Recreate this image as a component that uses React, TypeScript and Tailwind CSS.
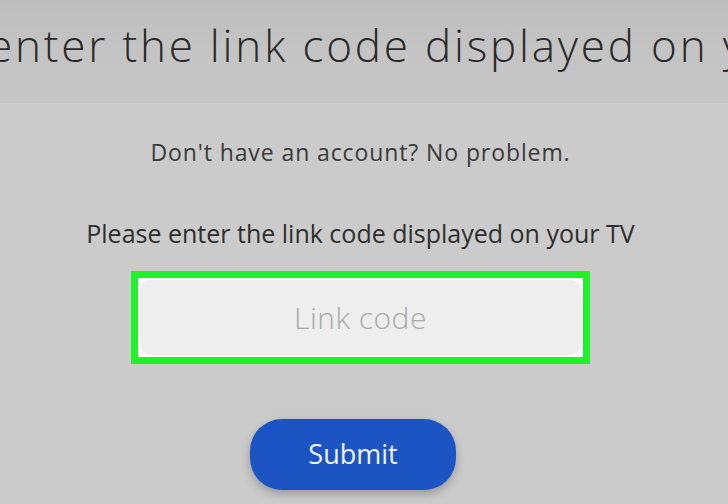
export default function App() {
  return (
    <div className="flex h-[504px] w-[728px] flex-col overflow-hidden bg-[#cbcbcb] font-['Open_Sans',sans-serif]">
      {/* header band with the oversized heading, clipped both sides */}
      <div className="relative h-[103px] shrink-0 overflow-hidden bg-gradient-to-b from-[#bdbdbd] via-[#c4c4c4] to-[#c6c6c6]">
        <div className="absolute left-[-12px] top-[17px] whitespace-nowrap text-[44px] font-light leading-[56px] tracking-[2.8px] text-[#2a2a2a]">
          enter the link code displayed on your TV
        </div>
      </div>

      <div className="flex flex-1 flex-col items-center pr-[7px]">
        <p className="mt-[36px] text-[23px] leading-[26px] tracking-[0.9px] text-[#3a3a3a]">Don't have an account? No problem.</p>
        <p className="mt-[53px] text-[25px] leading-[30px] text-[#2e2e2e]">Please enter the link code displayed on your TV</p>

        <div className="mt-[23px] h-[93px] w-[459px] border-[7px] border-[#1ff22a] bg-white p-[2px]">
          <div className="flex h-full w-full items-center justify-center rounded-[10px] bg-[#eeeeee]">
            <span className="text-[30px] font-light tracking-[0.5px] text-[#aaaaaa]">Link code</span>
          </div>
        </div>

        <button className="mr-[15px] mt-[55px] flex h-[71px] w-[206px] items-center justify-center rounded-[32px] bg-[#1c55c3] text-[27px] text-[#f2f2f2] shadow-[0_4px_10px_rgba(0,0,0,0.25)]">
          Submit
        </button>
      </div>
    </div>
  );
}
